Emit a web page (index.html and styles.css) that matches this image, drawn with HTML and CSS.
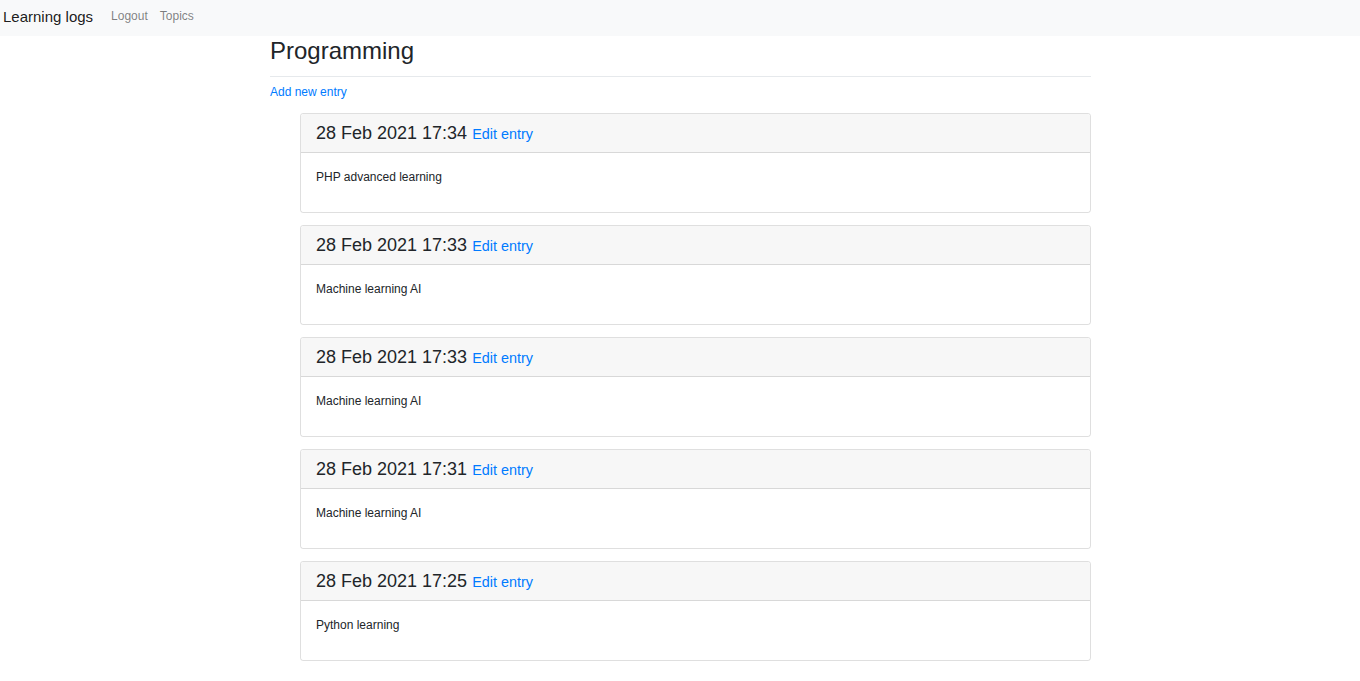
FILE: index.html
```html
<!DOCTYPE html>
<html lang="en">
<head>
<meta charset="utf-8">
<title>Learning logs</title>
<link rel="stylesheet" href="styles.css">
</head>
<body>
<nav class="navbar">
  <a class="brand" href="#">Learning logs</a>
  <ul class="nav">
    <li><a class="nav-link" href="#">Logout</a></li>
    <li><a class="nav-link" href="#">Topics</a></li>
  </ul>
</nav>
<main class="container">
  <div class="page-header">
    <h2>Programming</h2>
  </div>
  <p class="add"><a href="#">Add new entry</a></p>
  <div class="entries">
    <div class="card">
      <div class="card-header"><h4>28 Feb 2021 17:34 <small><a href="#">Edit entry</a></small></h4></div>
      <div class="card-body"><p>PHP advanced learning</p></div>
    </div>
    <div class="card">
      <div class="card-header"><h4>28 Feb 2021 17:33 <small><a href="#">Edit entry</a></small></h4></div>
      <div class="card-body"><p>Machine learning AI</p></div>
    </div>
    <div class="card">
      <div class="card-header"><h4>28 Feb 2021 17:33 <small><a href="#">Edit entry</a></small></h4></div>
      <div class="card-body"><p>Machine learning AI</p></div>
    </div>
    <div class="card">
      <div class="card-header"><h4>28 Feb 2021 17:31 <small><a href="#">Edit entry</a></small></h4></div>
      <div class="card-body"><p>Machine learning AI</p></div>
    </div>
    <div class="card">
      <div class="card-header"><h4>28 Feb 2021 17:25 <small><a href="#">Edit entry</a></small></h4></div>
      <div class="card-body"><p>Python learning</p></div>
    </div>
  </div>
</main>
</body>
</html>
```
FILE: styles.css
```css
* { box-sizing: border-box; }
html, body { margin: 0; padding: 0; }
body {
  font-family: "Liberation Sans", Arial, sans-serif;
  font-size: 12px;
  line-height: 1.5;
  color: #212529;
  background: #fff;
}
a { color: #007bff; text-decoration: none; }

.navbar {
  display: flex;
  align-items: center;
  height: 36px;
  padding: 0 3px 3px 3px;
  background: #f8f9fa;
}
.brand {
  font-size: 15px;
  line-height: 22px;
  color: rgba(0,0,0,.9);
  margin-right: 12px;
}
.nav {
  display: flex;
  list-style: none;
  margin: 0;
  padding: 0 0 2px 0;
}
.nav-link {
  display: block;
  padding: 0 6px;
  line-height: 18px;
  color: rgba(0,0,0,.5);
}

.container {
  width: 821px;
  margin-left: 270px;
}
.page-header {
  padding-top: 1px;
  padding-bottom: 10px;
  border-bottom: 1px solid #e6e9ec;
  margin-bottom: 6px;
}
h2 {
  margin: 0;
  font-size: 24px;
  font-weight: 500;
  line-height: 1.2;
}
.add { margin: 0 0 12px 0; line-height: 18px; }

.entries { margin-left: 30px; }
.card {
  border: 1px solid rgba(0,0,0,.125);
  border-radius: 3px;
  margin-bottom: 12px;
  overflow: hidden;
}
.card-header {
  height: 39px;
  padding: 9px 15px;
  background: #f7f7f7;
  border-bottom: 1px solid rgba(0,0,0,.125);
}
h4 {
  margin: 0;
  font-size: 18px;
  font-weight: 500;
  line-height: 20px;
}
h4 small { font-size: 80%; font-weight: 400; line-height: 1; }
.card-body { height: 59px; padding: 15px 15px 0 15px; }
.card-body p { margin: 0; line-height: 18px; }
```
